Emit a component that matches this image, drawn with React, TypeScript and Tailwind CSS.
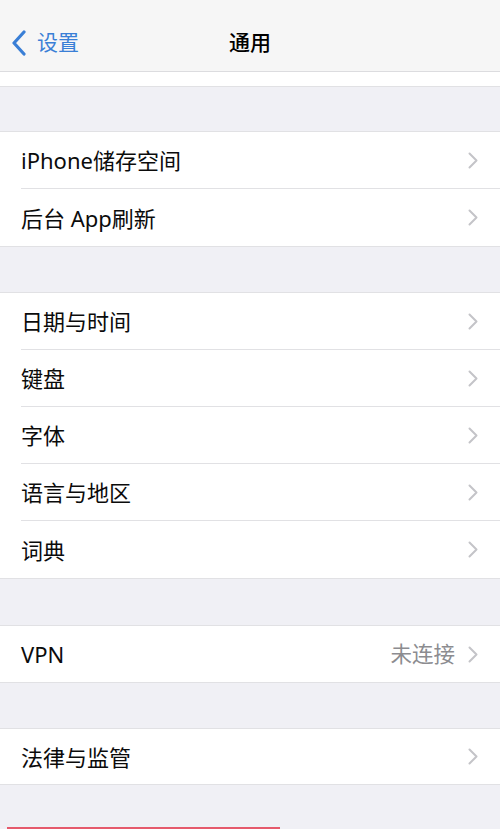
import React from "react";

const font = { fontFamily: '"Noto Sans", "Noto Sans CJK SC", sans-serif' };

function Chevron() {
  return (
    <svg width="10" height="17" viewBox="0 0 10 17" fill="none" className="shrink-0">
      <path d="M1.5 1.5 L8.5 8.5 L1.5 15.5" stroke="#c4c4c8" strokeWidth="2" strokeLinecap="round" strokeLinejoin="round" />
    </svg>
  );
}

function Row({ label, value, last, h }: { label: string; value?: string; last?: boolean; h: number }) {
  return (
    <div className="pl-[21px]">
      <div
        className={`flex items-center pr-[22px] ${last ? "" : "border-b border-[#e1e1e4]"}`}
        style={{ height: h }}
      >
        <span className="text-[22px] text-[#0b0b0b] flex-1 leading-none">{label}</span>
        {value && <span className="text-[21.5px] text-[#8c8c90] mr-[13px] leading-none">{value}</span>}
        <Chevron />
      </div>
    </div>
  );
}

function Group({ items, h }: { items: { label: string; value?: string }[]; h: number }) {
  return (
    <div className="bg-white border-y border-[#e1e1e4]">
      {items.map((it, i) => (
        <Row key={it.label} label={it.label} value={it.value} last={i === items.length - 1} h={h} />
      ))}
    </div>
  );
}

export default function App() {
  return (
    <div className="w-[500px] h-[829px] overflow-hidden bg-[#f0f0f5] relative" style={font}>
      <div className="h-[72px] pt-[14px] bg-[#f6f6f6] border-b border-[#dcdcdf] flex items-center relative">
        <div className="flex items-center pl-[11px] gap-[10px]">
          <svg width="16" height="26" viewBox="0 0 16 26" fill="none">
            <path d="M13 2 L3 13 L13 24" stroke="#3a7fd6" strokeWidth="3.2" strokeLinecap="round" strokeLinejoin="round" />
          </svg>
          <span className="text-[21px] text-[#3a7fd6] leading-none">设置</span>
        </div>
        <div className="absolute left-0 right-0 text-center text-[21px] font-medium text-black leading-none pointer-events-none">
          通用
        </div>
      </div>
      <div className="h-[15px] bg-white border-b border-[#e1e1e4]" />
      <div className="h-[44px]" />
      <Group h={57} items={[{ label: "iPhone储存空间" }, { label: "后台 App刷新" }]} />
      <div className="h-[45px]" />
      <Group
        h={57}
        items={[
          { label: "日期与时间" },
          { label: "键盘" },
          { label: "字体" },
          { label: "语言与地区" },
          { label: "词典" },
        ]}
      />
      <div className="h-[46px]" />
      <Group h={56} items={[{ label: "VPN", value: "未连接" }]} />
      <div className="h-[45px]" />
      <Group h={55} items={[{ label: "法律与监管" }]} />
      <div className="absolute left-[7px] bottom-0 w-[273px] h-[2px] bg-[#e55a6c]" />
    </div>
  );
}
